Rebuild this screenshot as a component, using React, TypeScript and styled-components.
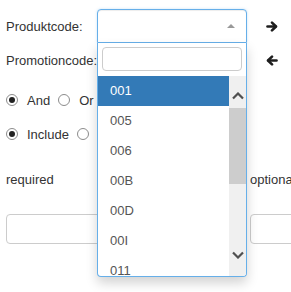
import React from 'react';
import styled, { createGlobalStyle } from 'styled-components';

const GlobalStyle = createGlobalStyle`
  html, body { margin: 0; padding: 0; background: #fff; overflow: hidden; }
  body {
    font-family: "Liberation Sans", Arial, sans-serif;
    font-size: 13px;
    color: #333;
  }
  * { box-sizing: border-box; }
`;

const Page = styled.div`
  width: 291px;
  height: 292px;
  overflow: hidden;
  padding: 9px 0 0 6px;
  display: flex;
  flex-direction: column;
`;

const FieldRow = styled.div<{ $raised?: boolean }>`
  display: flex;
  align-items: center;
  height: 34px;
  flex: none;
  position: relative;
  z-index: ${(p) => (p.$raised ? 2 : 1)};
`;

const Label = styled.label`
  width: 91px;
  flex: none;
  line-height: 15px;
  white-space: nowrap;
`;

const Control = styled.div`
  position: relative;
  width: 150px;
  height: 34px;
  flex: none;
`;

const Selection = styled.div<{ $open?: boolean }>`
  position: relative;
  height: 34px;
  background: #fff;
  border: 1px solid ${(p) => (p.$open ? '#66afe9' : '#ccc')};
  border-radius: ${(p) => (p.$open ? '4px 4px 0 0' : '4px')};
  box-shadow: inset 0 1px 1px rgba(0, 0, 0, 0.075), 0 0 3px rgba(102, 175, 233, 0.35);
`;

const Caret = styled.span`
  position: absolute;
  right: 11px;
  top: 14px;
  width: 0;
  height: 0;
  border-style: solid;
  border-width: 0 4px 4px 4px;
  border-color: transparent transparent #999 transparent;
`;

const TextField = styled.input`
  display: block;
  width: 100%;
  height: 34px;
  border: 1px solid #ccc;
  border-radius: 4px;
  background: #fff;
  font: inherit;
`;

const ArrowCell = styled.div`
  margin-left: 19px;
  display: flex;
  align-items: center;
`;

const Dropdown = styled.div`
  position: absolute;
  top: 100%;
  left: 0;
  width: 150px;
  background: #fff;
  border: 1px solid #66afe9;
  border-top: none;
  border-radius: 0 0 4px 4px;
  box-shadow: 0 6px 12px rgba(0, 0, 0, 0.175);
  z-index: 10;
`;

const SearchBox = styled.div`
  padding: 4px 4px 5px;
`;

const SearchInput = styled.input`
  display: block;
  width: 100%;
  height: 24px;
  border: 1px solid #ccc;
  border-radius: 4px;
  background: #fff;
  outline: none;
`;

const Results = styled.div`
  display: flex;
  height: 200px;
  overflow: hidden;
  border-radius: 0 0 3px 3px;
`;

const OptionList = styled.ul`
  list-style: none;
  margin: 0;
  padding: 0;
  flex: 1;
  overflow: hidden;
`;

const Option = styled.li<{ $active?: boolean }>`
  height: 30px;
  line-height: 30px;
  padding: 0 12px;
  color: ${(p) => (p.$active ? '#fff' : '#555')};
  background: ${(p) => (p.$active ? '#337ab7' : 'transparent')};
`;

const ScrollTrack = styled.div`
  width: 17px;
  flex: none;
  background: #f0f0f0;
  display: flex;
  flex-direction: column;
`;

const ScrollButton = styled.div<{ $down?: boolean }>`
  height: 32px;
  flex: none;
  display: flex;
  justify-content: center;
  align-items: ${(p) => (p.$down ? 'flex-start' : 'flex-end')};
  padding: ${(p) => (p.$down ? '7px 0 0' : '0 0 8px')};
`;

const ScrollThumb = styled.div`
  height: 76px;
  flex: none;
  background: #cdcdcd;
`;

const ScrollSpace = styled.div`
  flex: 1;
`;

const RadioRow = styled.div<{ $first?: boolean }>`
  display: flex;
  align-items: center;
  height: 34px;
  flex: none;
  margin-top: ${(p) => (p.$first ? '6px' : '0')};
`;

const RadioItem = styled.label`
  display: flex;
  align-items: center;
  margin-right: 8px;
  line-height: 15px;
  white-space: nowrap;
`;

const RadioCircle = styled.span<{ $checked?: boolean }>`
  position: relative;
  width: 12px;
  height: 12px;
  border-radius: 50%;
  border: 1px solid #8c8c8c;
  background: #fff;
  margin-right: 9px;
  flex: none;
  &::after {
    content: '';
    display: ${(p) => (p.$checked ? 'block' : 'none')};
    position: absolute;
    left: 2px;
    top: 2px;
    width: 6px;
    height: 6px;
    border-radius: 50%;
    background: #222;
  }
`;

const Columns = styled.div`
  display: grid;
  grid-template-columns: 238px 238px;
  column-gap: 6px;
  margin-top: 21px;
`;

const Column = styled.div`
  display: flex;
  flex-direction: column;
`;

const ColumnLabel = styled.div`
  line-height: 15px;
  white-space: nowrap;
  margin-bottom: 27px;
`;

const BoxInput = styled.div`
  height: 30px;
  border: 1px solid #ccc;
  border-radius: 4px;
  background: #fff;
`;

const Chevron = ({ down }: { down?: boolean }) => (
  <svg width="12" height="8" viewBox="0 0 12 8">
    <polyline
      points={down ? '1,1.5 6,6.5 11,1.5' : '1,6.5 6,1.5 11,6.5'}
      fill="none"
      stroke="#505050"
      strokeWidth="2.2"
    />
  </svg>
);

const BoldArrow = ({ left }: { left?: boolean }) => (
  <svg
    width="12"
    height="11"
    viewBox="0 0 12 11"
    style={left ? { transform: 'scaleX(-1)' } : undefined}
  >
    <g fill="none" stroke="#1e1e1e" strokeWidth="2.6" strokeLinecap="round" strokeLinejoin="round">
      <line x1="1.5" y1="5.5" x2="9.5" y2="5.5" />
      <polyline points="6,1.6 10,5.5 6,9.4" />
    </g>
  </svg>
);

const options = ['001', '005', '006', '00B', '00D', '00I', '011'];

export default function App() {
  return (
    <>
      <GlobalStyle />
      <Page>
        <FieldRow $raised>
          <Label>Produktcode:</Label>
          <Control>
            <Selection $open>
              <Caret />
            </Selection>
            <Dropdown>
              <SearchBox>
                <SearchInput type="text" />
              </SearchBox>
              <Results>
                <OptionList>
                  {options.map((o, i) => (
                    <Option key={o} $active={i === 0}>
                      {o}
                    </Option>
                  ))}
                </OptionList>
                <ScrollTrack>
                  <ScrollButton>
                    <Chevron />
                  </ScrollButton>
                  <ScrollThumb />
                  <ScrollSpace />
                  <ScrollButton $down>
                    <Chevron down />
                  </ScrollButton>
                </ScrollTrack>
              </Results>
            </Dropdown>
          </Control>
          <ArrowCell>
            <BoldArrow />
          </ArrowCell>
        </FieldRow>
        <FieldRow>
          <Label>Promotioncode:</Label>
          <Control>
            <TextField type="text" />
          </Control>
          <ArrowCell>
            <BoldArrow left />
          </ArrowCell>
        </FieldRow>
        <RadioRow $first>
          <RadioItem>
            <RadioCircle $checked />
            And
          </RadioItem>
          <RadioItem>
            <RadioCircle />
            Or
          </RadioItem>
        </RadioRow>
        <RadioRow>
          <RadioItem>
            <RadioCircle $checked />
            Include
          </RadioItem>
          <RadioItem>
            <RadioCircle />
            Exclude
          </RadioItem>
        </RadioRow>
        <Columns>
          <Column>
            <ColumnLabel>required</ColumnLabel>
            <BoxInput />
          </Column>
          <Column>
            <ColumnLabel>optional</ColumnLabel>
            <BoxInput />
          </Column>
        </Columns>
      </Page>
    </>
  );
}
